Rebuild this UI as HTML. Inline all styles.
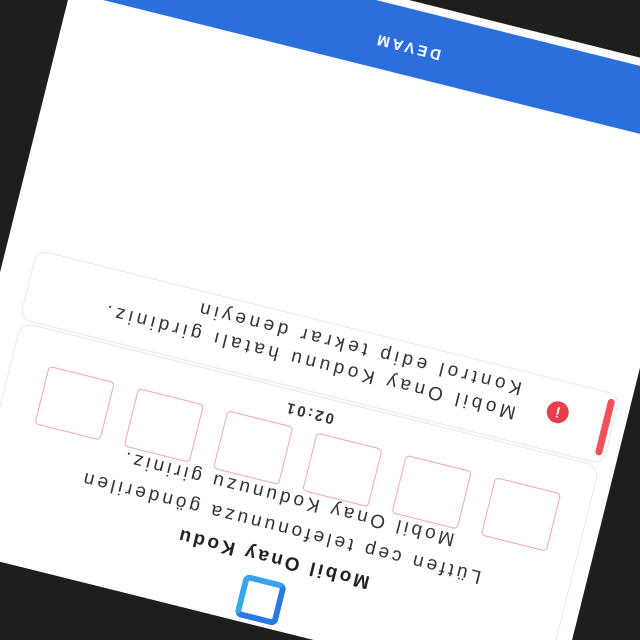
<!DOCTYPE html>
<html><head><meta charset="utf-8"><style>
html,body{margin:0;padding:0;width:640px;height:640px;overflow:hidden;}
body{background:#1e1e1e;font-family:"Liberation Sans",sans-serif;}
#wrap{position:relative;width:640px;height:640px;overflow:hidden;}
#ph{position:absolute;left:-2px;top:8px;width:644px;height:644px;background:#fff;transform-origin:322px 312px;transform:rotate(194deg);overflow:hidden;}
#ph div{position:absolute;}
.c{text-align:center;width:600px;left:10px;white-space:nowrap;}
.box{width:68px;height:60px;border:1.5px solid #f3a9ad;border-radius:4px;top:142px;box-sizing:border-box;}
</style></head><body>
<div id="wrap">
<div id="ph">
  <div style="left:15px;top:-20px;width:597px;height:258px;border:1.5px solid #e6e8f2;border-radius:14px;box-sizing:border-box;"></div>
  <div style="left:290px;top:4px;width:44px;height:44px;border:6px solid #2a78e4;border-radius:7px;box-sizing:border-box;border-right-color:#36a8f0;border-bottom-color:#3aa2ef;"></div>
  <div class="c" style="top:59px;font-size:19px;font-weight:bold;letter-spacing:2.8px;color:#222;">Mobil Onay Kodu</div>
  <div class="c" style="top:87px;font-size:19px;letter-spacing:3.4px;color:#333;line-height:30px;">Lütfen cep telefonunuza gönderilen<br>Mobil Onay Kodunuzu giriniz.</div>
  <div class="box" style="left:46px;"></div>
  <div class="box" style="left:138px;"></div>
  <div class="box" style="left:230px;"></div>
  <div class="box" style="left:322px;"></div>
  <div class="box" style="left:414px;"></div>
  <div class="box" style="left:506px;"></div>
  <div class="c" style="top:211px;font-size:15px;font-weight:bold;letter-spacing:2.5px;color:#333;">02:01</div>
  <div style="left:12px;top:240px;width:602px;height:72px;border:1.5px solid #e6e8f2;border-radius:12px;box-sizing:border-box;background:#fff;"></div>
  <div style="left:16px;top:248px;width:7px;height:58px;background:#f0525a;border-radius:4px;"></div>
  <div style="left:58px;top:269px;width:22px;height:22px;background:#ea3f4a;border-radius:50%;color:#fff;font-size:14px;font-weight:bold;text-align:center;line-height:22px;">i</div>
  <div style="left:110px;top:257px;font-size:19px;letter-spacing:4px;color:#333;line-height:25px;white-space:nowrap;">Mobil Onay Kodunu hatalı girdiniz.<br>Kontrol edip tekrar deneyin</div>
  <div style="left:0;top:570px;width:644px;height:66px;background:#2a6fdb;"></div>
  <div class="c" style="top:590px;font-size:15px;font-weight:bold;letter-spacing:3px;color:#fff;left:0;width:606px;">DEVAM</div>
</div>
</div>
</body></html>
